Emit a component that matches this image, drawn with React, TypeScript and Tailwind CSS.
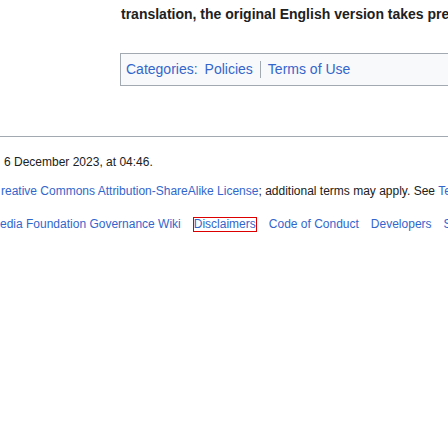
export default function App() {
  const footerLinks = ["Code of Conduct", "Developers", "Statistics"];

  return (
    <div className="w-[448px] h-[448px] overflow-hidden bg-white text-[#202122] font-['Liberation_Sans',Arial,sans-serif]">
      <div className="pl-[121px] pt-[6px]">
        <p className="whitespace-nowrap text-[14px] font-bold leading-[16px]">
          translation, the original English version takes precedence.
        </p>
      </div>

      <div className="ml-[120px] mt-[31px] h-[33px] border border-[#a2a9b1] border-r-0 bg-[#f8f9fa] flex items-center pl-[5px] text-[14px] text-[#3366cc] whitespace-nowrap">
        <span>Categories:</span>
        <span className="ml-[7px] pr-[7px]">Policies</span>
        <span className="h-[17px] border-l border-[#a2a9b1]" />
        <span className="pl-[7px]">Terms of Use</span>
      </div>

      <div className="mt-[50px] border-t border-[#a2a9b1]" />

      <div className="pl-[4px] pt-[18px] text-[12px] leading-[15px] whitespace-nowrap">
        <p>6 December 2023, at 04:46.</p>
        <p className="mt-[14px] -ml-[3px]">
          <span className="text-[#3366cc]">reative Commons Attribution-ShareAlike License</span>
          ; additional terms may apply. See <span className="text-[#3366cc]">Terms of Use</span>
        </p>
        <div className="mt-[18px] -ml-[4px] flex items-center gap-[12px] text-[#3366cc]">
          <span>edia Foundation Governance Wiki</span>
          <span className="border border-[#d00] leading-[13px]">Disclaimers</span>
          {footerLinks.map((l) => (
            <span key={l}>{l}</span>
          ))}
        </div>
      </div>
    </div>
  );
}
